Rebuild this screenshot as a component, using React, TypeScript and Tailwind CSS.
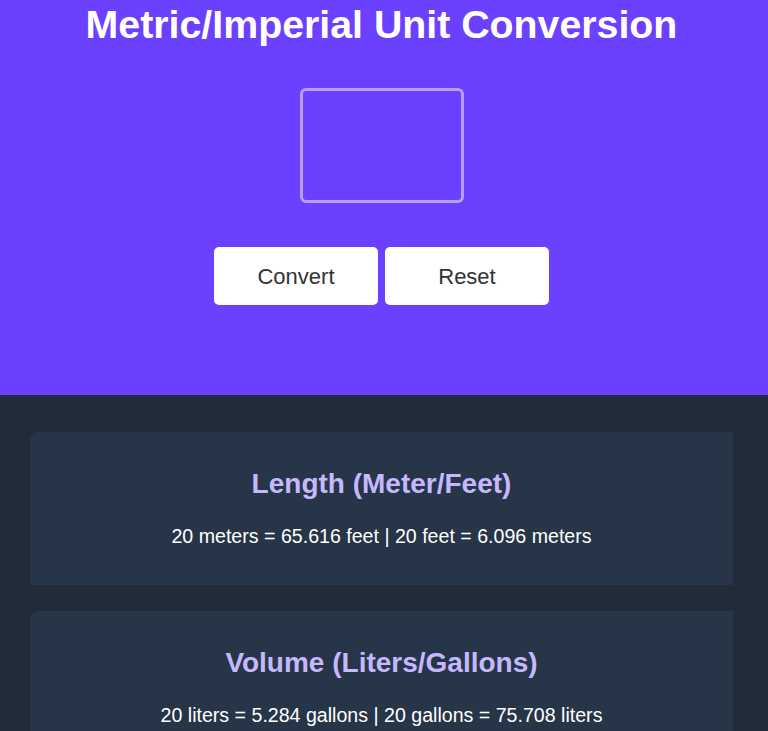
import React from "react";

const font = { fontFamily: '"Liberation Sans", Arial, sans-serif' };

function Card({ title, text }: { title: string; text: string }) {
  return (
    <div className="mx-[30px] rounded-tl-lg bg-[#273548] pt-9 pb-[37px] text-center">
      <h2 className="text-[28px] leading-[32px] font-bold text-[#c5b8ff]">{title}</h2>
      <p className="mt-6 text-[19.6px] leading-[24px] text-white">{text}</p>
    </div>
  );
}

export default function App() {
  return (
    <div className="min-h-screen w-full bg-[#222b38]" style={font}>
      <div className="w-full bg-[#6c40ff]">
        <div className="flex w-[763px] flex-col items-center pt-px pb-[90px]">
          <h1 className="text-[39.3px] leading-[46px] font-bold text-white">
            Metric/Imperial Unit Conversion
          </h1>
          <div className="mt-[41px] h-[115px] w-[164px] rounded-md border-[3px] border-white/50" />
          <div className="mt-[44px] flex gap-[7px]">
            <button className="h-[58px] w-[164px] rounded-[5px] bg-white text-[22px] text-[#333333]">
              Convert
            </button>
            <button className="h-[58px] w-[164px] rounded-[5px] bg-white text-[22px] text-[#333333]">
              Reset
            </button>
          </div>
        </div>
      </div>
      <div className="flex w-[763px] flex-col gap-[26px] pt-[37px] pb-10">
        <Card title="Length (Meter/Feet)" text="20 meters = 65.616 feet | 20 feet = 6.096 meters" />
        <Card title="Volume (Liters/Gallons)" text="20 liters = 5.284 gallons | 20 gallons = 75.708 liters" />
      </div>
    </div>
  );
}
